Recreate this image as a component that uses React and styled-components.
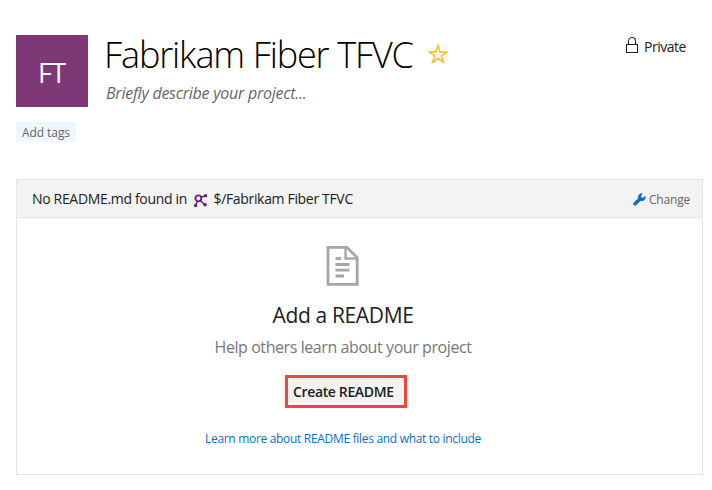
import React from "react";
import styled, { createGlobalStyle } from "styled-components";

const GlobalStyle = createGlobalStyle`
  body {
    margin: 0;
    background: #fff;
    color: #212121;
    font-family: "Open Sans", "Noto Sans", sans-serif;
    font-size: 14px;
  }
`;

const Page = styled.main`
  box-sizing: border-box;
  width: 712px;
  height: 490px;
  padding: 35px 9px 15px 16px;
  display: flex;
  flex-direction: column;
`;

const Header = styled.header`
  display: flex;
  height: 72px;
`;

const Avatar = styled.div`
  width: 72px;
  height: 72px;
  flex: none;
  background: #7e3878;
  color: #fff;
  font-size: 27px;
  line-height: 75px;
  letter-spacing: -0.8px;
  text-indent: 22px;
`;

const Heading = styled.div`
  flex: 1;
  margin: -1px 0 0 15px;
`;

const TitleRow = styled.div`
  display: flex;
  align-items: center;
  height: 42px;
`;

const Title = styled.h1`
  margin: 0 0 0 1px;
  color: #000;
  font-size: 36px;
  font-weight: 300;
  line-height: 42px;
  letter-spacing: -1.13px;
  word-spacing: 0.5px;
  white-space: nowrap;
`;

const StarIcon = styled.svg`
  width: 22px;
  height: 22px;
  margin: 0 0 3px 14px;
`;

const Description = styled.p`
  margin: 6px 0 0 3px;
  color: #666;
  font-size: 16px;
  font-style: italic;
  line-height: 22px;
  letter-spacing: -0.26px;
`;

const Visibility = styled.div`
  display: flex;
  align-items: flex-start;
  height: 24px;
  margin-right: 17px;
  color: #212121;
  line-height: 24px;
  letter-spacing: -0.48px;
`;

const LockIcon = styled.svg`
  width: 14px;
  height: 18px;
  margin: 1px 5px 0 0;
`;

const AddTags = styled.button`
  align-self: flex-start;
  width: 60px;
  height: 20px;
  margin-top: 15px;
  padding: 1px 0 0 6px;
  border: 0;
  background: #eff6fc;
  color: #666;
  font: 400 12px/20px "Open Sans", "Noto Sans", sans-serif;
  letter-spacing: -0.07px;
  text-align: left;
`;

const Panel = styled.section`
  box-sizing: border-box;
  height: 296px;
  margin-top: 37px;
  border: 1px solid #e6e6e6;
`;

const PanelHeader = styled.div`
  display: flex;
  align-items: center;
  height: 37px;
  padding: 0 12px 0 15px;
  border-bottom: 1px solid #e6e6e6;
  background: #f3f3f3;
  letter-spacing: -0.33px;
  line-height: 38px;
  white-space: nowrap;
`;

const RepoIcon = styled.svg`
  width: 15px;
  height: 15px;
  margin: 4px 5.5px 0 6px;
`;

const ChangeLink = styled.a`
  display: flex;
  align-items: center;
  margin-left: auto;
  color: #666;
  font-size: 12px;
  letter-spacing: -0.2px;
  line-height: 37px;
  padding-top: 2px;
`;

const WrenchIcon = styled.svg`
  width: 13px;
  height: 13px;
  margin: 0 3px 0 0;
`;

const EmptyState = styled.div`
  display: flex;
  flex-direction: column;
  align-items: center;
  padding: 27px 33px 0 0;
`;

const DocumentIcon = styled.svg`
  width: 33px;
  height: 41px;
  margin-right: 2px;
`;

const EmptyTitle = styled.h2`
  margin: 14px 0 0;
  color: #212121;
  font-size: 21px;
  font-weight: 400;
  line-height: 30px;
  letter-spacing: -0.35px;
`;

const EmptyHint = styled.p`
  margin: 6px 0 0;
  color: #777;
  font-size: 16px;
  line-height: 22px;
  letter-spacing: -0.42px;
`;

const ButtonArea = styled.div`
  display: flex;
  box-sizing: border-box;
  width: 125px;
  height: 33px;
  margin: 17px 0 0 3px;
  padding-left: 3px;
  background: linear-gradient(#f3f3f3, #f3f3f3) 0 0 / 125px 32px no-repeat;
`;

const CreateButton = styled.button`
  box-sizing: border-box;
  width: 122px;
  height: 33px;
  padding: 0 0 0 5px;
  border: 3px solid #f04835;
  background: #f3f3f3;
  color: #212121;
  font: 600 14px/27px "Open Sans", "Noto Sans", sans-serif;
  letter-spacing: -0.36px;
  text-align: left;
  white-space: nowrap;
`;

const LearnMore = styled.a`
  margin-top: 20px;
  color: #106ebe;
  font-size: 12px;
  line-height: 22px;
  letter-spacing: -0.31px;
`;

const Star = () => (
  <StarIcon viewBox="0 0 22 22" fill="none" stroke="#fdb515" strokeWidth="1.4">
    <path d="M11 2.6 L13.1 9 H19.7 L14.4 12.9 L16.4 19.4 L11 15.4 L5.6 19.4 L7.6 12.9 L2.3 9 H8.9 Z" />
  </StarIcon>
);

const Lock = () => (
  <LockIcon viewBox="0 0 14 18" fill="none" stroke="#212121" strokeWidth="1.1">
    <path d="M1.5 8.5 H12.5 V16.5 H1.5 Z M3.5 8.5 V5 A3.5 3.5 0 0 1 10.5 5 V8.5" />
  </LockIcon>
);

const Repo = () => (
  <RepoIcon viewBox="0 0 14 14" fill="none" stroke="#68217a" strokeWidth="1.4">
    <circle cx="5" cy="5" r="2.8" strokeWidth="1.7" />
    <path d="M7.5 4 L11.5 2.5 M6.8 7 L11 11 M4 7.5 L2.5 11.5" />
    <g fill="#68217a" stroke="none">
      <circle cx="11.7" cy="2.5" r="1.6" />
      <circle cx="11.2" cy="11" r="1.7" />
      <circle cx="2.5" cy="11.6" r="1.6" />
    </g>
  </RepoIcon>
);

const Wrench = () => (
  <WrenchIcon viewBox="0 0 13 13" fill="#106ebe">
    <path d="M12.3 2.7 L10.2 4.8 L8.4 4.4 L8 2.7 L10 0.6 A3.7 3.7 0 0 0 5.2 5.2 L0.8 9.5 A1.7 1.7 0 0 0 3.3 12.1 L7.7 7.7 A3.7 3.7 0 0 0 12.3 2.7 Z" />
  </WrenchIcon>
);

const DocumentGlyph = () => (
  <DocumentIcon viewBox="0 0 33 41" fill="none" stroke="#a6a6a6" strokeWidth="2.8">
    <path d="M2 2.4 H21 L31.2 12.6 V39.4 H2 Z" />
    <path d="M19.5 2.4 V13.5 H31.2" strokeWidth="2.4" />
    <path d="M9.5 13.5 H15 M9.5 19.5 H23.5 M9.5 25.2 H23.5 M9.5 31 H18" />
  </DocumentIcon>
);

export default function App() {
  return (
    <Page>
      <GlobalStyle />
      <Header>
        <Avatar>FT</Avatar>
        <Heading>
          <TitleRow>
            <Title>Fabrikam Fiber TFVC</Title>
            <Star />
          </TitleRow>
          <Description>Briefly describe your project...</Description>
        </Heading>
        <Visibility>
          <Lock />
          Private
        </Visibility>
      </Header>
      <AddTags>Add tags</AddTags>
      <Panel>
        <PanelHeader>
          No README.md found in
          <Repo />
          $/Fabrikam Fiber TFVC
          <ChangeLink>
            <Wrench />
            Change
          </ChangeLink>
        </PanelHeader>
        <EmptyState>
          <DocumentGlyph />
          <EmptyTitle>Add a README</EmptyTitle>
          <EmptyHint>Help others learn about your project</EmptyHint>
          <ButtonArea>
            <CreateButton>Create README</CreateButton>
          </ButtonArea>
          <LearnMore>Learn more about README files and what to include</LearnMore>
        </EmptyState>
      </Panel>
    </Page>
  );
}
